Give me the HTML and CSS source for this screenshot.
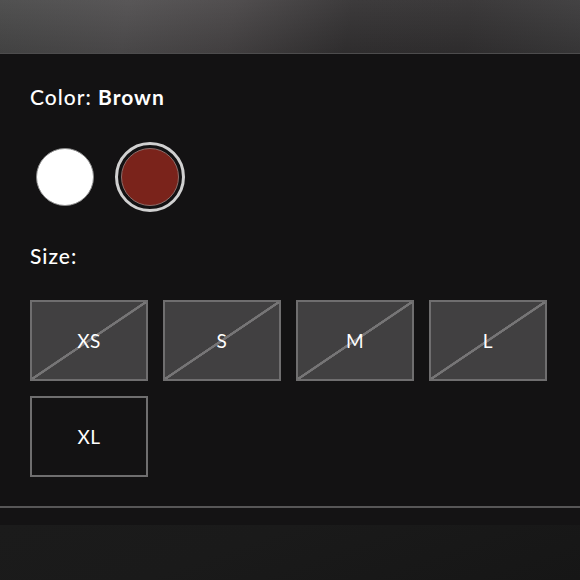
FILE: index.html
```html
<!DOCTYPE html>
<html>
<head>
<meta charset="utf-8">
<link rel="stylesheet" href="styles.css">
</head>
<body>
<div class="page">
  <header class="topbar"></header>
  <main class="panel">
    <div class="label">Color: <strong>Brown</strong></div>
    <div class="swatches">
      <div class="swatch"><span class="dot dot-white"></span></div>
      <div class="swatch selected"><span class="dot dot-brown"></span></div>
    </div>
    <div class="label size-label">Size:</div>
    <div class="sizes">
      <div class="size na">XS</div>
      <div class="size na">S</div>
      <div class="size na">M</div>
      <div class="size na">L</div>
      <div class="size">XL</div>
    </div>
  </main>
  <footer class="bottom">
    <div class="bottom-strip"></div>
    <div class="bottom-fill"></div>
  </footer>
</div>
</body>
</html>
```

FILE: styles.css
```css
* { box-sizing: border-box; }
html, body {
  margin: 0;
  padding: 0;
  background: #131213;
}
.page {
  width: 580px;
  height: 580px;
  overflow: hidden;
  display: flex;
  flex-direction: column;
  font-family: Lato, "Noto Sans", sans-serif;
  color: #ffffff;
}
.topbar {
  height: 54px;
  flex: none;
  background:
    linear-gradient(180deg, rgba(255,255,255,0.04) 0%, rgba(0,0,0,0.12) 100%),
    linear-gradient(100deg, #4a4a4a 0%, #525051 22%, #4a4748 40%, #353334 60%, #343233 80%, #3d3c3d 100%);
  border-bottom: 1px solid #4d4c4d;
}
.panel {
  flex: none;
  height: 454px;
  padding: 31px 30px 0 30px;
  border-bottom: 2px solid #575657;
}
.label {
  font-size: 21px;
  line-height: 24px;
  font-weight: 500;
  letter-spacing: 1px;
}
.label strong { font-weight: 700; }
.swatches {
  display: flex;
  gap: 15px;
  margin-top: 33px;
}
.swatch {
  width: 70px;
  height: 70px;
  border-radius: 50%;
  display: flex;
  align-items: center;
  justify-content: center;
}
.swatch.selected {
  border: 3px solid #d0d0d0;
}
.dot {
  display: block;
  width: 58px;
  height: 58px;
  border-radius: 50%;
}
.dot-white {
  background: #ffffff;
  border: 1px solid #8a8a8a;
}
.dot-brown {
  background: #7a231b;
  border: 1px solid #8c6d6a;
}
.size-label {
  margin-top: 32px;
}
.sizes {
  display: grid;
  grid-template-columns: repeat(4, 118px);
  column-gap: 15px;
  row-gap: 15px;
  margin-top: 32px;
}
.size {
  height: 81px;
  border: 2px solid #6f6e6f;
  display: flex;
  align-items: center;
  justify-content: center;
  font-size: 19px;
  font-weight: 400;
  letter-spacing: 0.5px;
  color: #ffffff;
}
.size.na {
  background:
    linear-gradient(to bottom right, transparent calc(50% - 1.5px), #767576 calc(50% - 1px), #767576 calc(50% + 1px), transparent calc(50% + 1.5px)),
    #414041;
}
.bottom {
  flex: 1;
  display: flex;
  flex-direction: column;
}
.bottom-strip {
  height: 17px;
  background: #141314;
}
.bottom-fill {
  flex: 1;
  background: linear-gradient(160deg, #1b1b1b 0%, #1a1a1a 40%, #161616 100%);
}
```
